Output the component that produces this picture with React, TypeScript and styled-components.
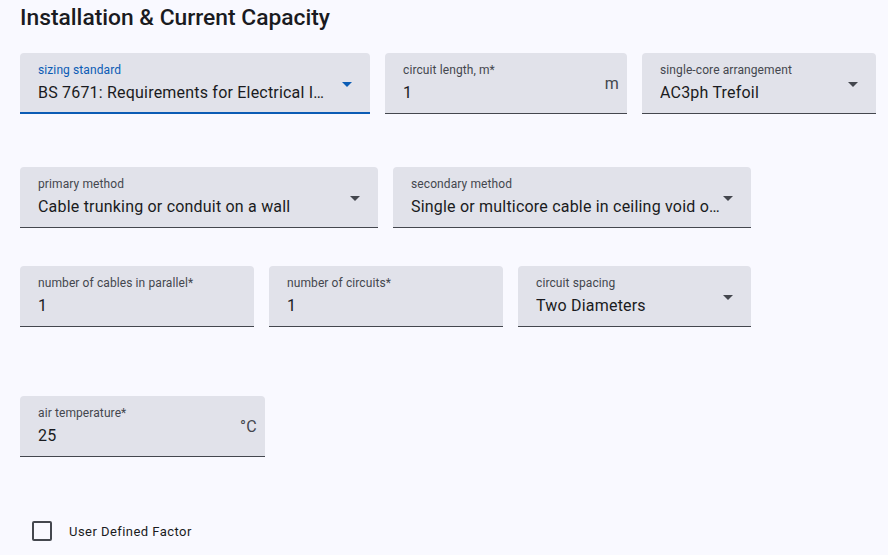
import React from "react";
import styled, { createGlobalStyle } from "styled-components";

const Global = createGlobalStyle`
  html, body { margin: 0; padding: 0; background: #f9f9ff; }
  body { font-family: Roboto, "Noto Sans", sans-serif; color: #1a1b21; }
`;

const Page = styled.div`
  padding: 4px 12px 0 20px;
  width: 888px;
  box-sizing: border-box;
`;

const Title = styled.h2`
  margin: 0 0 21px 0;
  font-size: 22.8px;
  font-weight: 500;
  line-height: 28px;
  letter-spacing: 0;
  color: #1a1b21;
`;

const Row = styled.div<{ $mb: number }>`
  display: flex;
  gap: 15px;
  margin-bottom: ${(p) => p.$mb}px;
`;

const Field = styled.div<{ $w: number; $focused?: boolean }>`
  position: relative;
  width: ${(p) => p.$w}px;
  height: 61px;
  box-sizing: border-box;
  background: #e1e2ea;
  border-radius: 4px 4px 0 0;
  border-bottom: ${(p) => (p.$focused ? "2px solid #0b5cb5" : "1px solid #44474e")};
  padding: 9px 18px 0 18px;
  display: flex;
  align-items: flex-start;
`;

const Body = styled.div`
  flex: 1;
  min-width: 0;
  display: flex;
  flex-direction: column;
`;

const Label = styled.div<{ $focused?: boolean }>`
  font-size: 12px;
  line-height: 16px;
  letter-spacing: 0.1px;
  color: ${(p) => (p.$focused ? "#0b5cb5" : "#44474e")};
  white-space: nowrap;
`;

const Value = styled.div`
  margin-top: 3px;
  font-size: 16px;
  line-height: 24px;
  letter-spacing: 0.2px;
  color: #1a1b21;
  white-space: nowrap;
  overflow: hidden;
  text-overflow: ellipsis;
`;

const Suffix = styled.div`
  font-size: 16px;
  line-height: 24px;
  color: #44474e;
  margin-top: 10px;
  margin-right: -10px;
  letter-spacing: 0.3px;
`;

const Arrow = styled.div<{ $focused?: boolean; $tight?: boolean }>`
  width: 0;
  height: 0;
  border-left: 5px solid transparent;
  border-right: 5px solid transparent;
  border-top: 5px solid ${(p) => (p.$focused ? "#0b5cb5" : "#44474e")};
  margin-top: 20px;
  margin-left: ${(p) => (p.$tight ? "0" : "10px")};
  flex-shrink: 0;
`;

const CheckRow = styled.label`
  display: flex;
  align-items: center;
  gap: 17px;
  padding-left: 12px;
  margin-top: 64px;
  font-size: 13px;
  letter-spacing: 0.45px;
  color: #1a1b21;
`;

const Box = styled.span`
  width: 16px;
  height: 16px;
  border: 2px solid #44474e;
  border-radius: 2px;
  display: inline-block;
`;

type FProps = {
  w: number;
  label: string;
  value: string;
  select?: boolean;
  focused?: boolean;
  suffix?: string;
  tight?: boolean;
};

function TextField({ w, label, value, select, focused, suffix, tight }: FProps) {
  return (
    <Field $w={w} $focused={focused}>
      <Body>
        <Label $focused={focused}>{label}</Label>
        <Value>{value}</Value>
      </Body>
      {suffix && <Suffix>{suffix}</Suffix>}
      {select && <Arrow $focused={focused} $tight={tight} />}
    </Field>
  );
}

export default function App() {
  return (
    <>
      <Global />
      <Page>
        <Title>Installation &amp; Current Capacity</Title>
        <Row $mb={53}>
          <TextField w={350} label="sizing standard" value="BS 7671: Requirements for Electrical Installations" select focused />
          <TextField w={242} label="circuit length, m*" value="1" suffix="m" />
          <TextField w={234} label="single-core arrangement" value="AC3ph Trefoil" select />
        </Row>
        <Row $mb={38}>
          <TextField w={358} label="primary method" value="Cable trunking or conduit on a wall" select />
          <TextField w={358} label="secondary method" value="Single or multicore cable in ceiling void or similar" select tight />
        </Row>
        <Row $mb={69}>
          <TextField w={234} label="number of cables in parallel*" value="1" />
          <TextField w={234} label="number of circuits*" value="1" />
          <TextField w={233} label="circuit spacing" value="Two Diameters" select />
        </Row>
        <Row $mb={0}>
          <TextField w={245} label="air temperature*" value="25" suffix="°C" />
        </Row>
        <CheckRow>
          <Box />
          User Defined Factor
        </CheckRow>
      </Page>
    </>
  );
}
